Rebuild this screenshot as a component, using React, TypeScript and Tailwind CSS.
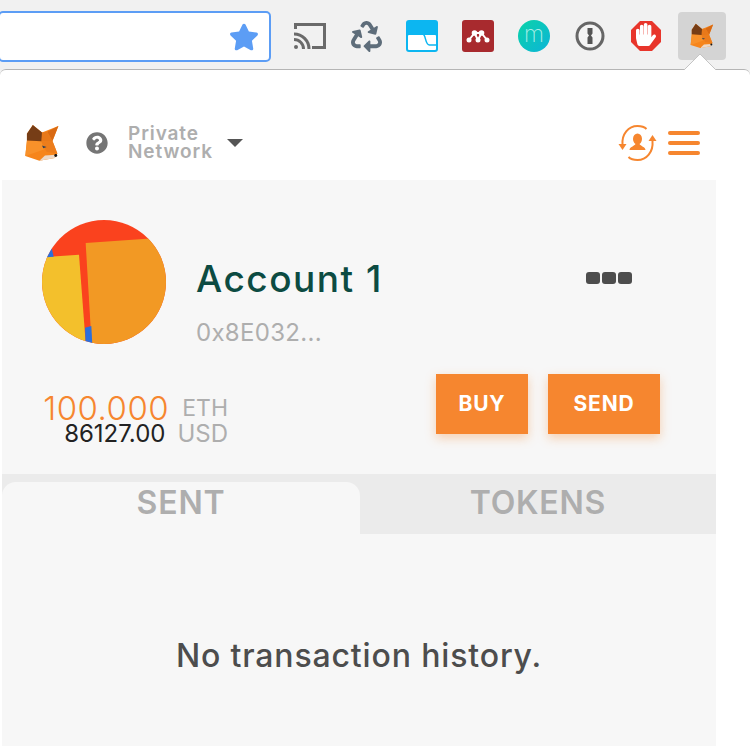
import React from 'react';
import { FaRecycle, FaQuestionCircle, FaStar, FaHandPaper } from 'react-icons/fa';

const Fox: React.FC<{ className?: string }> = ({ className }) => (
  <svg viewBox="12 10 108 116" className={className}>
    <polygon points="38,13 66,36 116,16 98,62 113,100 105,114 58,122 15,108 20,60 20,40" fill="#f6851b" />
    <polygon points="116,16 82,34 98,62" fill="#d96a13" />
    <polygon points="66,36 82,34 98,62 64,63" fill="#e8791a" />
    <polygon points="20,60 64,63 72,88 15,108" fill="#f8912a" />
    <polygon points="64,63 98,62 113,100 80,95" fill="#ec7d1c" />
    <polygon points="38,13 20,40 20,60 64,63 66,36" fill="#763d16" />
    <polygon points="58,122 105,114 108,104 75,106" fill="#ecd9c8" />
    <polygon points="66,76 80,80 70,84" fill="#334155" />
    <circle cx="108" cy="106" r="4.500" fill="#161616" />
  </svg>
);

const ToolbarIcon: React.FC<{ children: React.ReactNode }> = ({ children }) => (
  <div className="w-[56px] h-[48px] flex items-center justify-center shrink-0">{children}</div>
);

const App: React.FC = () => {
  return (
    <div className="w-[750px] h-[746px] overflow-hidden bg-[#f1f1f1] font-['Inter','Liberation_Sans',sans-serif] relative">
      {/* browser toolbar */}
      <div className="h-[69px] flex items-start pt-[11px]">
        <div className="w-[273px] h-[51px] -ml-[2px] shrink-0 bg-white border-2 border-[#5c9df5] rounded-[5px] flex items-center justify-end pr-[10px]">
          <FaStar className="text-[#5c9df5] w-[30px] h-[30px]" />
        </div>
        <div className="ml-[11px] mt-[1px] flex items-center">
          <ToolbarIcon>
            <svg viewBox="0 0 32 26" className="w-[32px] h-[26px]" fill="none" stroke="#6a6a6a" strokeWidth="3">
              <path d="M1.500 6V1.500h29v23H18" />
              <path d="M0 11a15 15 0 0 1 15 15M0 16.500a9.500 9.500 0 0 1 9.500 9.500" />
              <circle cx="2" cy="24" r="2" fill="#6a6a6a" stroke="none" />
            </svg>
          </ToolbarIcon>
          <ToolbarIcon>
            <FaRecycle className="text-[#5e6d7a] w-[31px] h-[31px]" />
          </ToolbarIcon>
          <ToolbarIcon>
            <svg viewBox="0 0 32 32" className="w-[32px] h-[32px]">
              <rect width="32" height="32" rx="3" fill="#0cb6f1" />
              <rect x="2" y="15" width="28" height="15" rx="1" fill="#fff" />
              <path d="M17 14c3 1 2 11 6.500 11H31" fill="none" stroke="#0cb6f1" strokeWidth="1.500" />
            </svg>
          </ToolbarIcon>
          <ToolbarIcon>
            <svg viewBox="0 0 32 32" className="w-[32px] h-[32px]">
              <rect width="32" height="32" rx="3" fill="#a82a2e" />
              <path d="M7 20 12.500 13 16 20 19.500 13 25 20M12.500 13 19.500 13" fill="none" stroke="#fff" strokeWidth="2" />
              <circle cx="7" cy="20" r="2.500" fill="#fff" />
              <circle cx="16" cy="20" r="2.500" fill="#fff" />
              <circle cx="25" cy="20" r="2.500" fill="#fff" />
              <circle cx="12.500" cy="13" r="2.800" fill="#fff" />
              <circle cx="19.500" cy="13" r="2.800" fill="#fff" />
            </svg>
          </ToolbarIcon>
          <ToolbarIcon>
            <div className="w-[32px] h-[32px] rounded-full bg-[linear-gradient(135deg,#0bd3a8,#0cb4d8)] flex items-center justify-center text-[#a8ece6] text-[23px] font-extralight leading-none pb-[3px]">
              m
            </div>
          </ToolbarIcon>
          <ToolbarIcon>
            <svg viewBox="0 0 30 30" className="w-[30px] h-[30px]">
              <circle cx="15" cy="15" r="13" fill="#f4f4f4" stroke="#666" strokeWidth="3" />
              <path d="M12.500 7h5v5.500l-1.500 2 1.500 2V23h-5v-6.500l1.500-2-1.500-2z" fill="#555" />
            </svg>
          </ToolbarIcon>
          <ToolbarIcon>
            <div className="relative w-[30px] h-[30px]">
              <svg viewBox="0 0 30 30" className="w-[30px] h-[30px]">
                <polygon points="9,0 21,0 30,9 30,21 21,30 9,30 0,21 0,9" fill="#e8352b" />
              </svg>
              <FaHandPaper className="absolute left-[5px] top-[1px] w-[20px] h-[25px] text-white -scale-x-100" />
            </div>
          </ToolbarIcon>
          <ToolbarIcon>
            <div className="w-[48px] h-[48px] rounded-[4px] bg-[#d4d4d4] flex items-center justify-center">
              <Fox className="w-[24px] h-[26px]" />
            </div>
          </ToolbarIcon>
        </div>
      </div>

      {/* popup arrow */}
      <svg viewBox="0 0 32 16" className="absolute left-[684px] top-[54px] w-[32px] h-[16px] z-10">
        <polygon points="0,16 16,0 32,16" fill="#fff" />
        <polyline points="0,16 16,0 32,16" fill="none" stroke="#c4c4c4" />
      </svg>

      {/* popup */}
      <div className="h-[677px] bg-white border-t border-[#b5b5b5] rounded-t-[6px]">
        <div className="h-[110px] flex items-center pt-[36px] pl-[24px] pr-[50px]">
          <Fox className="w-[36px] h-[38px]" />
          <FaQuestionCircle className="ml-[26px] w-[22px] h-[22px] text-[#757575]" />
          <div className="ml-[20px] w-[85px] text-[19px] leading-[18px] font-semibold text-[#aeaeae] tracking-[0.900px]">
            <div>Private</div>
            <div>Network</div>
          </div>
          <div className="ml-[14px] w-0 h-0 border-x-[8px] border-x-transparent border-t-[8px] border-t-[#555]" />
          <div className="ml-auto flex items-center gap-[11px]">
            <svg viewBox="0 0 38 38" className="w-[39px] h-[38px]" fill="none" stroke="#f6862f" strokeWidth="2">
              <path d="M4 21C3 10 10 2 19 2c4 0 7 1 9 3" />
              <path d="M34 17c1 11-6 19-15 19-4 0-7-1-9-3" />
              <polygon points="0,20 8,20 4,26" fill="#f6862f" stroke="none" />
              <polygon points="30,17 38,17 34,11" fill="#f6862f" stroke="none" />
              <ellipse cx="19" cy="15" rx="4.500" ry="5.500" fill="#f6862f" stroke="none" />
              <path d="M11 26c0-3 5-4 6-6h4c1 2 6 3 6 6z" fill="#f6862f" stroke="none" />
            </svg>
            <div className="flex flex-col gap-[6px] w-[32px]">
              <div className="h-[4px] rounded-full bg-[#f6862f]" />
              <div className="h-[4px] rounded-full bg-[#f6862f]" />
              <div className="h-[4px] rounded-full bg-[#f6862f]" />
            </div>
          </div>
        </div>

        {/* wallet panel */}
        <div className="ml-[2px] w-[714px] h-[566px] bg-[#f7f7f7]">
          <div className="pl-[40px] pt-[40px] flex items-center">
            <svg viewBox="66 44 372 372" className="w-[124px] h-[124px] rounded-full shrink-0">
              <rect x="66" y="44" width="372" height="372" fill="#fa421e" />
              <polygon points="197,113 500,92 500,420 215,418" fill="#f29924" />
              <polygon points="60,156 177,148 197,412 60,412" fill="#f3c02c" />
              <polygon points="80,156 101,154 95,128 78,140" fill="#2b6fdc" />
              <polygon points="195,367 214,362 217,420 197,420" fill="#2b6fdc" />
            </svg>
            <div className="ml-[30px] h-[124px] w-[436px]">
              <div className="pt-[34px] flex items-center justify-between">
                <div className="text-[37px] leading-[50px] font-medium text-[#0c4b42] tracking-[1.500px]">Account 1</div>
                <div className="flex gap-[2px] mb-[2px]">
                  <div className="w-[14px] h-[12px] rounded-[3px] bg-[#4d4d4d]" />
                  <div className="w-[14px] h-[12px] rounded-[3px] bg-[#4d4d4d]" />
                  <div className="w-[14px] h-[12px] rounded-[3px] bg-[#4d4d4d]" />
                </div>
              </div>
              <div className="mt-[14px] text-[24px] leading-[30px] text-[#aeaeae] tracking-[0.300px]">0x8E032...</div>
            </div>
          </div>

          <div className="mt-[30px] h-[60px] pl-[40px] flex items-start">
            <div className="w-[186px] pt-[22px]">
              <div className="text-[33px] leading-[25px] font-light text-[#f6862f] tracking-[0.500px] flex justify-end items-center">
                <span>100.000</span>
                <span className="ml-[13px] text-[23px] text-[#aeaeae] font-normal tracking-normal">ETH</span>
              </div>
              <div className="text-[24px] leading-[25px] text-[#222] flex justify-end items-center">
                <span>86127.00</span>
                <span className="ml-[12px] text-[#aeaeae]">USD</span>
              </div>
            </div>
            <div className="ml-[208px] flex gap-[20px]">
              <button className="w-[92px] h-[60px] bg-[#f6862f] text-white text-[21px] font-bold tracking-[0.800px] shadow-[0_4px_10px_rgba(246,134,47,0.35)]">
                BUY
              </button>
              <button className="w-[112px] h-[60px] bg-[#f6862f] text-white text-[21px] font-bold tracking-[0.800px] shadow-[0_4px_10px_rgba(246,134,47,0.35)]">
                SEND
              </button>
            </div>
          </div>

          <div className="mt-[40px] h-[60px] bg-[#ebebeb] flex items-end">
            <div className="w-[358px] h-[52px] bg-[#f7f7f7] rounded-t-[14px] flex items-center justify-center text-[32px] font-semibold text-[#aeaeae] tracking-[0.800px] pb-[10px]">
              SENT
            </div>
            <div className="flex-1 h-[60px] flex items-center justify-center text-[32px] font-semibold text-[#aeaeae] tracking-[0.800px] pb-[2px]">
              TOKENS
            </div>
          </div>

          <div className="pt-[101px] text-center text-[32px] leading-[42px] font-medium text-[#4d4d4d] tracking-[0.850px]">
            No transaction history.
          </div>
        </div>
      </div>
    </div>
  );
};

export default App;
